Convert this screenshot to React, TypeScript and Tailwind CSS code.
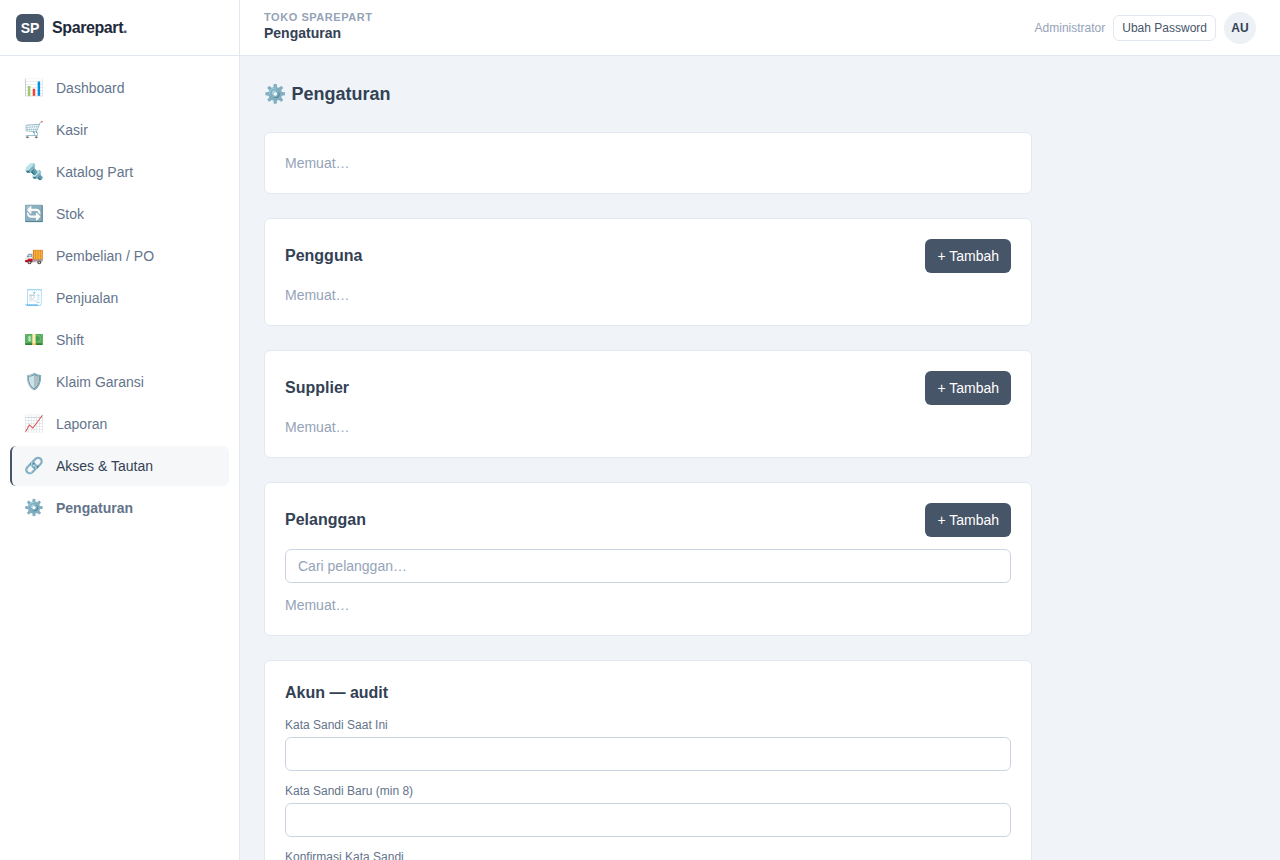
import { useId } from "react";
import type { ReactNode } from "react";

type NavEntry = { icon: string; label: string; state?: "highlighted" | "current" };

const navEntries: NavEntry[] = [
  { icon: "📊", label: "Dashboard" },
  { icon: "🛒", label: "Kasir" },
  { icon: "🔩", label: "Katalog Part" },
  { icon: "🔄", label: "Stok" },
  { icon: "🚚", label: "Pembelian / PO" },
  { icon: "🧾", label: "Penjualan" },
  { icon: "💵", label: "Shift" },
  { icon: "🛡️", label: "Klaim Garansi" },
  { icon: "📈", label: "Laporan" },
  { icon: "🔗", label: "Akses & Tautan", state: "highlighted" },
  { icon: "⚙️", label: "Pengaturan", state: "current" },
];

const navStyles = {
  normal: "border-transparent text-[#64748b]",
  highlighted: "border-[#475569] bg-[#f5f7f9] text-[#334155]",
  current: "border-transparent font-semibold text-[#64748b]",
};

function Sidebar() {
  return (
    <aside className="flex w-60 shrink-0 flex-col border-r border-[#e2e8f0] bg-white">
      <div className="flex h-14 shrink-0 items-center gap-2 border-b border-[#e2e8f0] px-4">
        <span className="flex size-7 items-center justify-center rounded-md bg-[#475569] text-sm font-bold text-white">
          SP
        </span>
        <span className="text-base font-bold tracking-tight text-[#1e293b]">
          Sparepart<span className="text-[#475569]">.</span>
        </span>
      </div>
      <nav className="flex flex-col gap-0.5 overflow-y-auto px-2.5 py-3">
        {navEntries.map((entry) => (
          <a
            key={entry.label}
            href="#"
            aria-current={entry.state === "current" ? "page" : undefined}
            className={`flex h-10 items-center gap-3 rounded-md border-l-2 px-3 text-sm ${navStyles[entry.state ?? "normal"]}`}
          >
            <span className="w-5 shrink-0 text-center text-base font-normal">{entry.icon}</span>
            <span>{entry.label}</span>
          </a>
        ))}
      </nav>
    </aside>
  );
}

function Header() {
  return (
    <header className="flex h-14 shrink-0 items-center justify-between border-b border-[#e2e8f0] bg-white px-6">
      <div>
        <p className="text-[11px] leading-none font-semibold tracking-wider text-[#94a3b8] uppercase">
          Toko Sparepart
        </p>
        <p className="text-sm leading-5 font-semibold text-[#334155]">Pengaturan</p>
      </div>
      <div className="flex items-center gap-2">
        <span className="text-xs text-[#94a3b8]">Administrator</span>
        <button
          type="button"
          className="rounded-md border border-[#e2e8f0] px-2 py-1 text-xs text-[#475569]"
        >
          Ubah Password
        </button>
        <span className="flex size-8 items-center justify-center rounded-full bg-[#edf0f4] text-xs font-bold text-[#334155]">
          AU
        </span>
      </div>
    </header>
  );
}

function Card({ children }: { children: ReactNode }) {
  return (
    <section className="flex flex-col gap-3 rounded-md border border-[#e2e8f0] bg-white p-5">
      {children}
    </section>
  );
}

function Loading() {
  return <p className="text-sm text-[#94a3b8]">Memuat…</p>;
}

function ListCard({ title, children }: { title: string; children?: ReactNode }) {
  return (
    <Card>
      <div className="flex items-center justify-between">
        <h2 className="text-base font-semibold text-[#334155]">{title}</h2>
        <button
          type="button"
          className="h-[34px] rounded-md bg-[#475569] px-3 text-sm text-white"
        >
          + Tambah
        </button>
      </div>
      {children}
      <Loading />
    </Card>
  );
}

const inputStyle =
  "h-[34px] w-full rounded-md border border-[#cbd5e1] bg-white px-3 text-sm text-[#334155] placeholder:text-[#94a3b8]";

function PasswordField({ label }: { label: string }) {
  const id = useId();
  return (
    <div className="flex flex-col gap-1">
      <label htmlFor={id} className="text-xs text-[#64748b]">
        {label}
      </label>
      <input id={id} type="password" className={inputStyle} />
    </div>
  );
}

export default function App() {
  return (
    <div className="flex h-screen bg-[#f0f4f8] font-['Liberation_Sans',Arial,'Noto_Color_Emoji',sans-serif]">
      <Sidebar />
      <div className="flex min-w-0 flex-1 flex-col">
        <Header />
        <main className="flex-1 overflow-y-auto p-6 [scrollbar-width:none]">
          <div className="flex max-w-3xl flex-col gap-6">
            <h1 className="text-lg leading-7 font-semibold text-[#334155]">⚙️ Pengaturan</h1>
            <Card>
              <Loading />
            </Card>
            <ListCard title="Pengguna" />
            <ListCard title="Supplier" />
            <ListCard title="Pelanggan">
              <input
                type="search"
                aria-label="Cari pelanggan"
                placeholder="Cari pelanggan…"
                className={inputStyle}
              />
            </ListCard>
            <Card>
              <h2 className="text-base font-semibold text-[#334155]">Akun — audit</h2>
              <PasswordField label="Kata Sandi Saat Ini" />
              <PasswordField label="Kata Sandi Baru (min 8)" />
              <PasswordField label="Konfirmasi Kata Sandi" />
            </Card>
          </div>
        </main>
      </div>
    </div>
  );
}
